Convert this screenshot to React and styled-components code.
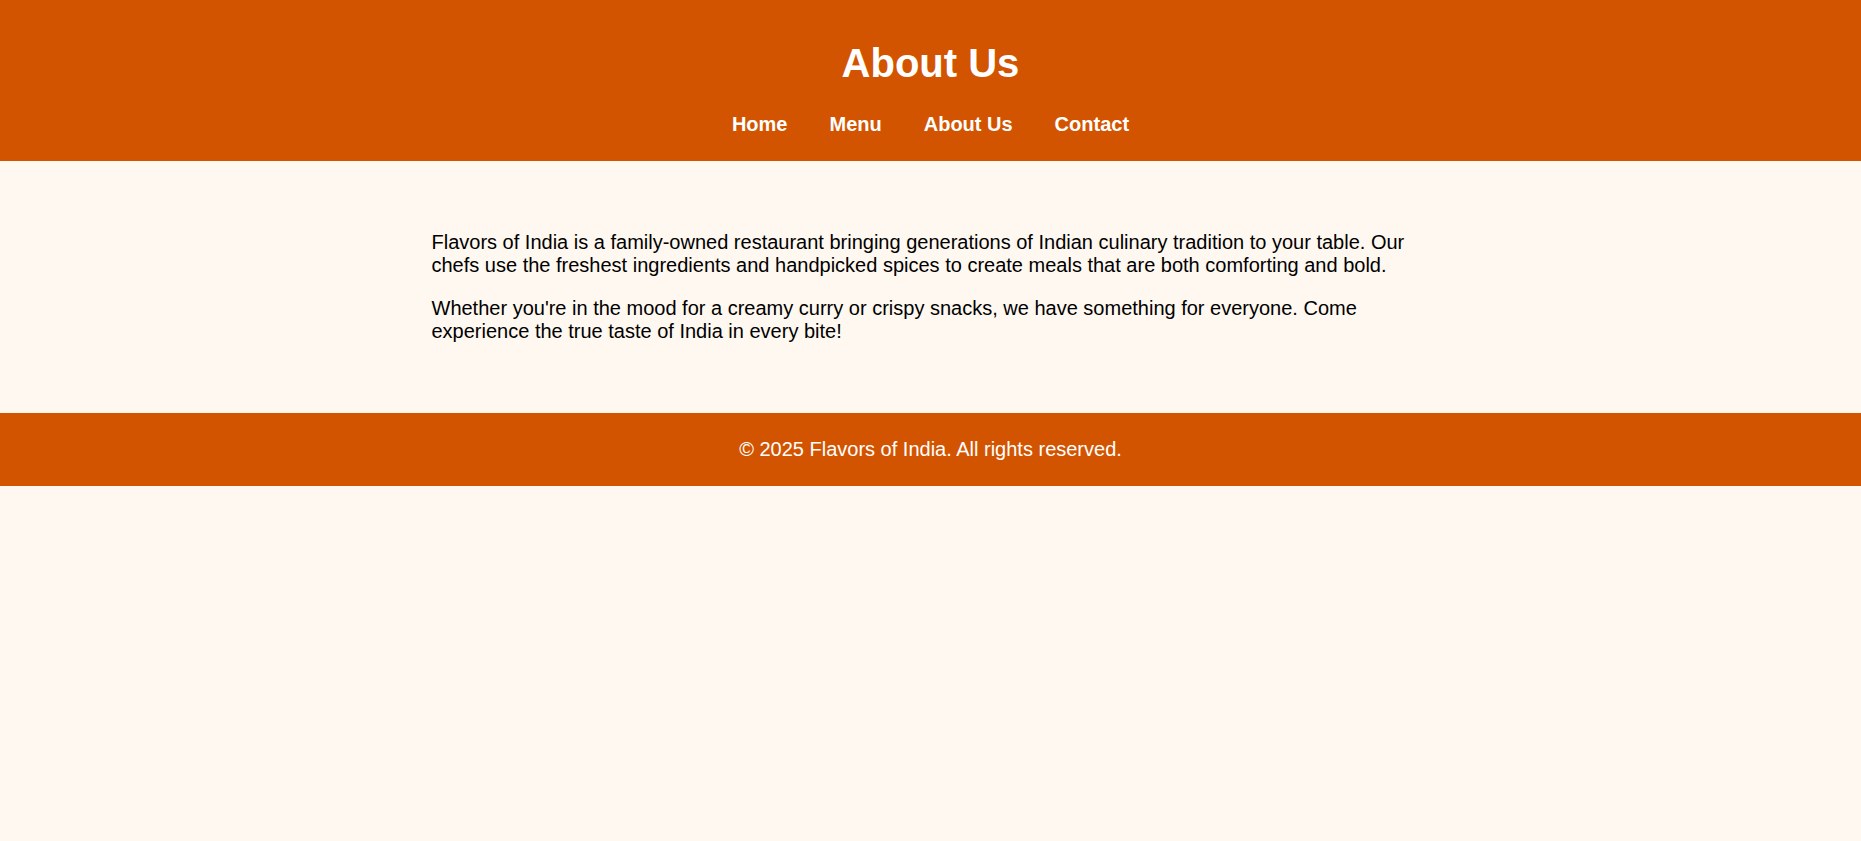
import React from "react";
import styled, { createGlobalStyle } from "styled-components";

const GlobalStyle = createGlobalStyle`
	body {
		margin: 0;
		background: #fff8f0;
		font-family: "Liberation Sans", Arial, sans-serif;
		color: #000;
	}
`;

const links = ["Home", "Menu", "About Us", "Contact"];

export default function App() {
	return (
		<>
			<GlobalStyle />
			<Header>
				<Title>About Us</Title>
				<Nav>
					{links.map(link => (
						<NavLink key={link} href="#">
							{link}
						</NavLink>
					))}
				</Nav>
			</Header>
			<Main>
				<Text>
					Flavors of India is a family-owned restaurant bringing generations of Indian
					culinary tradition to your table. Our chefs use the freshest ingredients and
					handpicked spices to create meals that are both comforting and bold.
				</Text>
				<Text>
					Whether you're in the mood for a creamy curry or crispy snacks, we have
					something for everyone. Come experience the true taste of India in every bite!
				</Text>
			</Main>
			<Footer>© 2025 Flavors of India. All rights reserved.</Footer>
		</>
	);
}

const Header = styled.header`
	background: #d35400;
	color: #fff;
	text-align: center;
	padding: 41px 0 25px;
`;

const Title = styled.h1`
	margin: 0 0 27px;
	font-size: 40px;
	font-weight: bold;
`;

const Nav = styled.nav`
	display: flex;
	justify-content: center;
	gap: 42px;
`;

const NavLink = styled.a`
	color: #fff;
	text-decoration: none;
	font-weight: bold;
	font-size: 20px;
`;

const Main = styled.main`
	max-width: 1000px;
	margin: 0 auto;
	padding: 50px 0 50px 2px;
`;

const Text = styled.p`
	margin: 20px 0;
	font-size: 20px;
`;

const Footer = styled.footer`
	background: #d35400;
	color: #fff;
	text-align: center;
	font-size: 20px;
	padding: 25px 0;
`;
